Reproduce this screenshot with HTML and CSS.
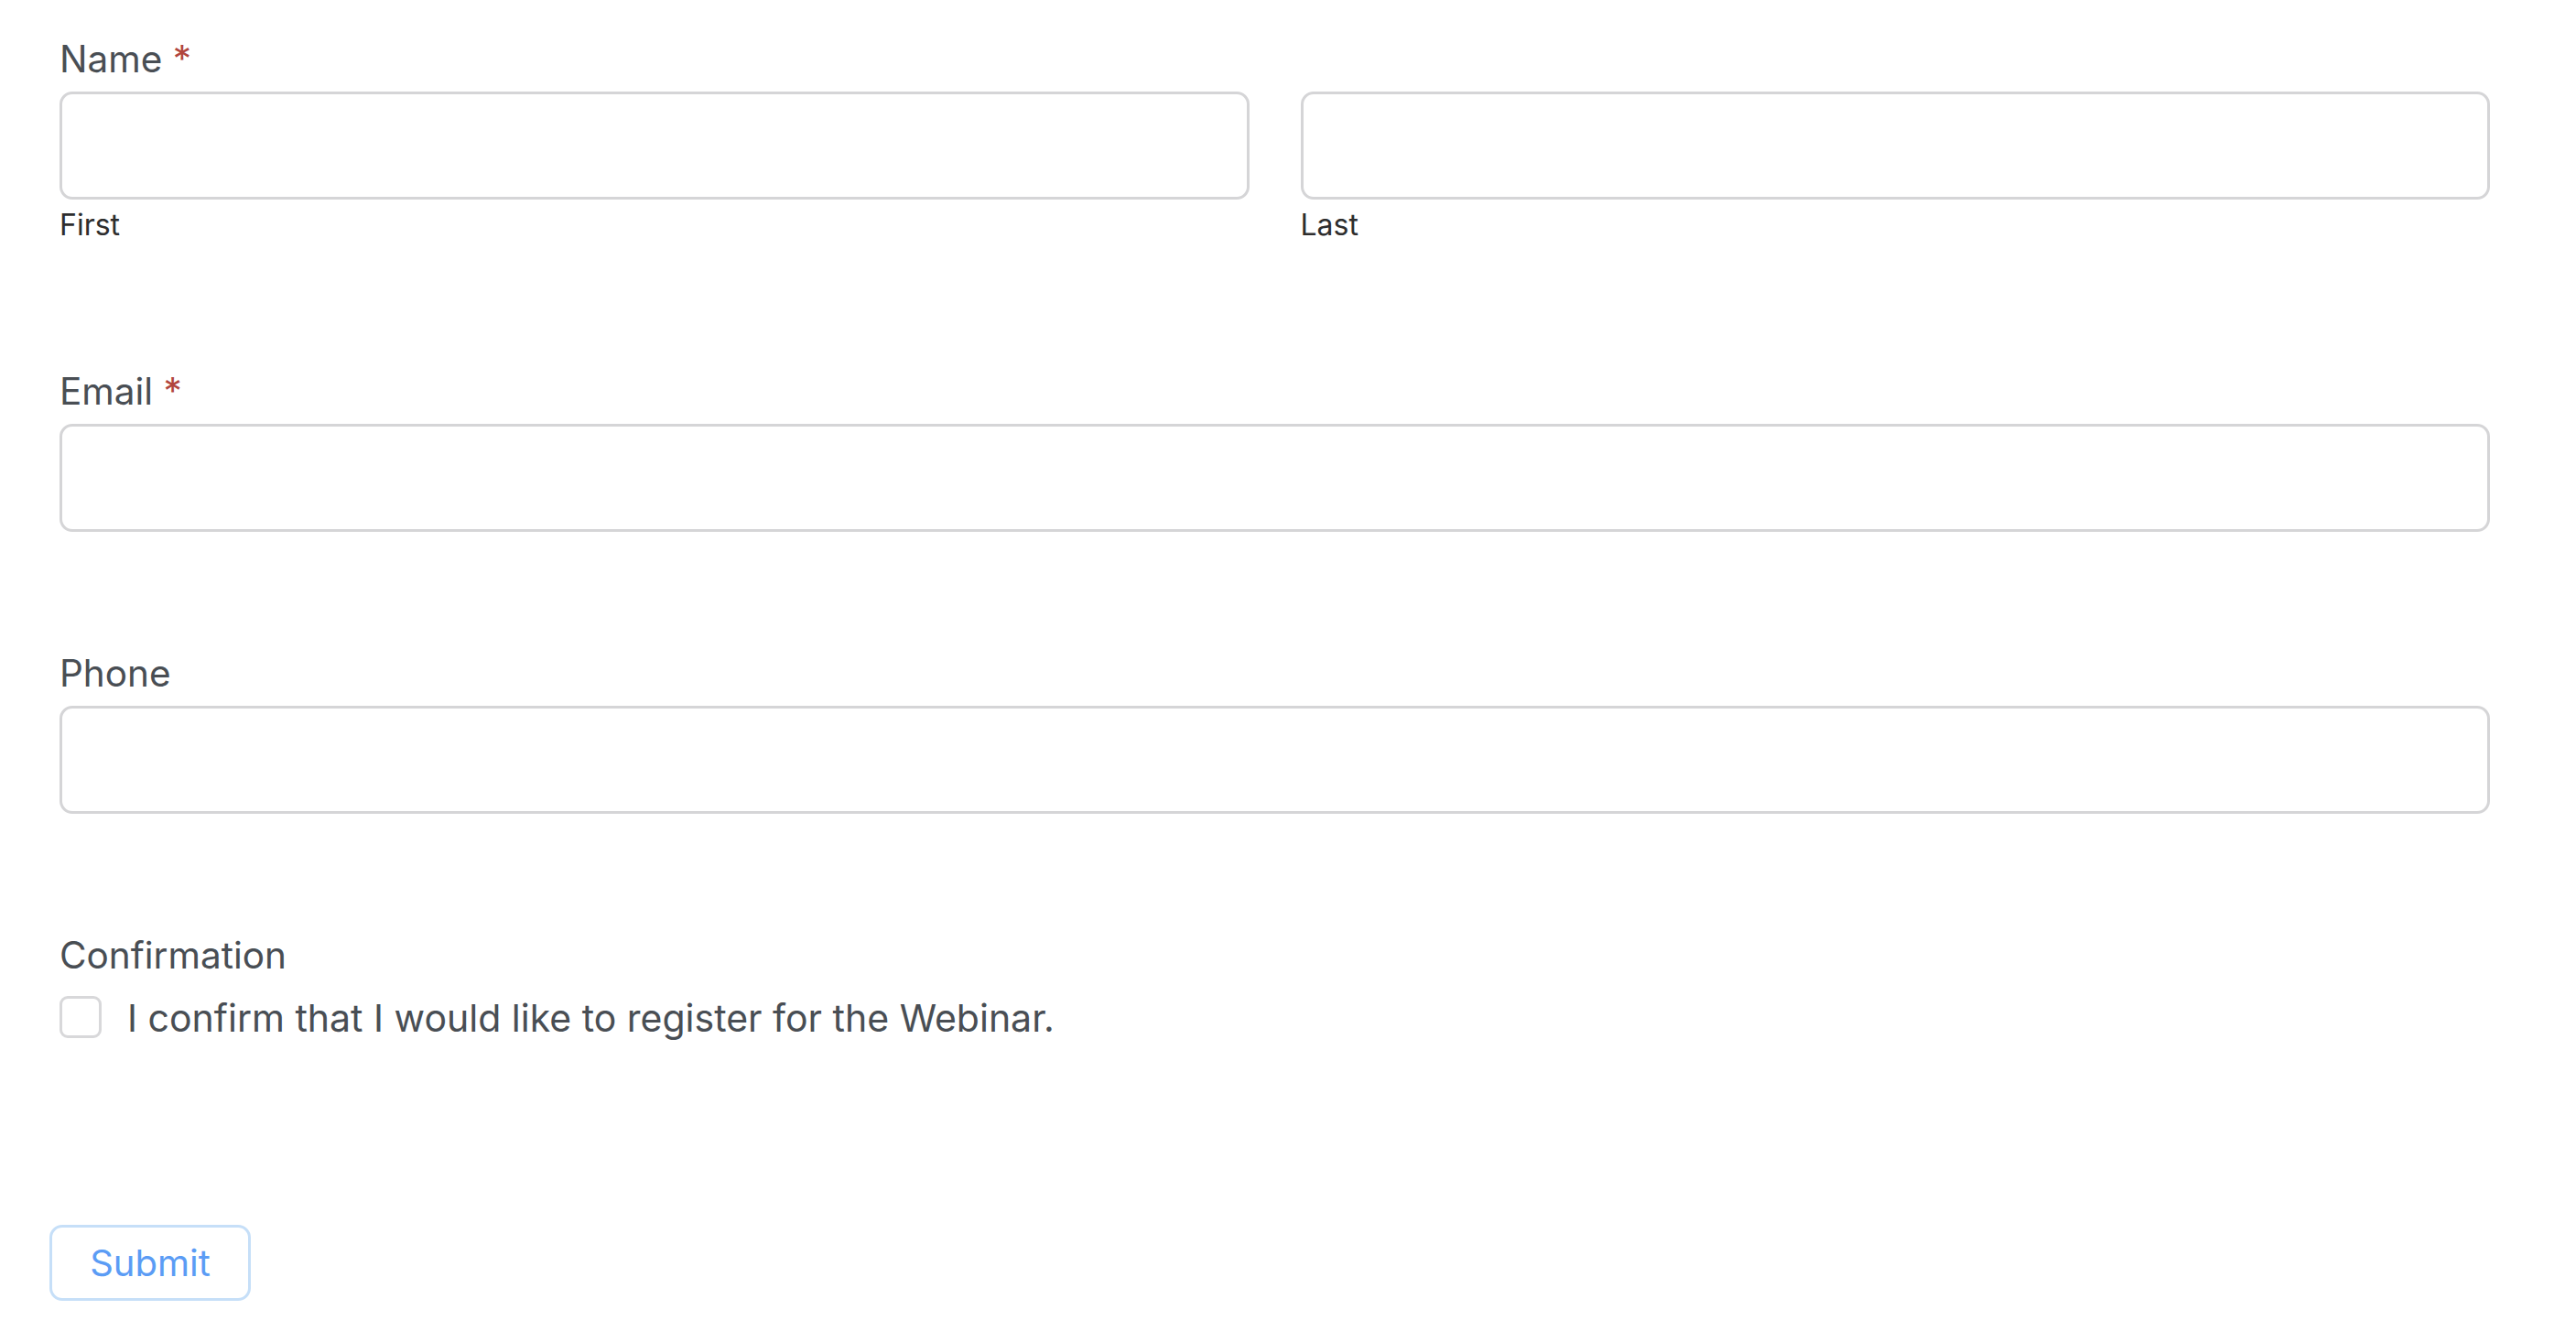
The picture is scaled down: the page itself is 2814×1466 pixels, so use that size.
FILE: index.html
```html
<!DOCTYPE html>
<html lang="en">
<head>
<meta charset="utf-8"/>
<title>Webinar registration</title>
<link rel="stylesheet" href="styles.css">
</head>
<body>

<form class="form" onsubmit="return false;">

  <div class="field field-name">
    <label class="field-label" for="first">Name <span class="required">*</span></label>
    <div class="name-row">
      <div class="name-part">
        <input class="text-input" type="text" name="first" id="first">
        <label class="sub-label" for="first">First</label>
      </div>
      <div class="name-part">
        <input class="text-input" type="text" name="last" id="last">
        <label class="sub-label" for="last">Last</label>
      </div>
    </div>
  </div>

  <div class="field">
    <label class="field-label" for="email">Email <span class="required">*</span></label>
    <input class="text-input" type="email" name="email" id="email">
  </div>

  <div class="field">
    <label class="field-label" for="phone">Phone</label>
    <input class="text-input" type="tel" name="phone" id="phone">
  </div>

  <div class="field field-confirm">
    <div class="field-label">Confirmation</div>
    <label class="check-row" for="confirm">
      <input class="check" type="checkbox" name="confirm" id="confirm">
      <span class="check-text">I confirm that I would like to register for the Webinar.</span>
    </label>
  </div>

  <button class="submit" type="submit">Submit</button>

</form>

</body>
</html>
```

FILE: styles.css
```css
body {
  margin: 0;
  background: #fff;
  font-family: Inter, "Noto Sans", sans-serif;
  color: #494e54;
}
.form {
  padding: 41px 94px 60px 65px;
}
.field {
  margin-bottom: 131px;
}
.field-label {
  display: block;
  font-size: 40.5px;
  line-height: 48px;
  margin-bottom: 11px;
}
.required {
  color: #b1453d;
}
.name-row {
  display: grid;
  grid-template-columns: 1fr 1fr;
  column-gap: 56px;
}
.text-input {
  display: block;
  box-sizing: border-box;
  width: 100%;
  height: 118px;
  margin: 0;
  padding: 0 24px;
  border: 3px solid #d5d5d7;
  border-radius: 14px;
  background: #fff;
  font: 40px Inter, sans-serif;
  outline: none;
}
.sub-label {
  display: block;
  margin-top: 10px;
  margin-bottom: 9px;
  font-size: 32px;
  line-height: 36px;
  color: #2e2e2e;
}
.field-confirm {
  margin-bottom: 202px;
}
.field-confirm .field-label {
  margin-bottom: 17px;
}
.check-row {
  display: flex;
  align-items: center;
  gap: 28px;
  font-size: 41px;
  line-height: 48px;
}
.check-text {
  padding-top: 3px;
}
.check {
  appearance: none;
  -webkit-appearance: none;
  box-sizing: border-box;
  width: 46px;
  height: 46px;
  margin: 0;
  border: 3px solid #d8d8da;
  border-radius: 9px;
  background: #fff;
}
.check:checked {
  background: #5b9cf5;
  border-color: #5b9cf5;
}
.submit {
  box-sizing: border-box;
  margin-left: -11px;
  width: 220px;
  height: 83px;
  padding: 0;
  border: 3px solid #c6dff8;
  border-radius: 14px;
  background: #fff;
  color: #5b9cf5;
  font: 40px Inter, sans-serif;
}
```
